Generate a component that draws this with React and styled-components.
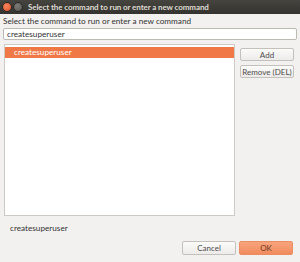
import React from "react"
import styled, {createGlobalStyle} from "styled-components"

const Global = createGlobalStyle`
	html, body {
		margin: 0;
		padding: 0;
		background: #f2f1f0;
	}
	body {
		font-family: Lato, "Open Sans", sans-serif;
		font-size: 8.2px;
		color: #333;
	}
`

export default function App() {
	return (
		<Window>
			<Global />
			<TitleBar>
				<Controls>
					<Dot close />
					<Dot />
				</Controls>
				<Title>Select the command to run or enter a new command</Title>
			</TitleBar>
			<Body>
				<Label>Select the command to run or enter a new command</Label>
				<Input defaultValue="createsuperuser" />
				<Middle>
					<List>
						<Row selected>createsuperuser</Row>
					</List>
					<Side>
						<Button>Add</Button>
						<Button>Remove (DEL)</Button>
					</Side>
				</Middle>
				<Preview>createsuperuser</Preview>
				<Footer>
					<Button wide>Cancel</Button>
					<Button wide primary>OK</Button>
				</Footer>
			</Body>
		</Window>
	)
}

const Window = styled.div`
	width: 300px;
	height: 262px;
	display: flex;
	flex-direction: column;
	background: #f2f1f0;
	overflow: hidden;
`

const TitleBar = styled.div`
	height: 14px;
	flex: none;
	display: flex;
	align-items: center;
	background: linear-gradient(#45443f, #34332f);
	padding-left: 2px;
`

const Controls = styled.div`
	display: flex;
	gap: 1px;
	width: 26px;
`

const Dot = styled.span`
	width: 8px;
	height: 8px;
	border-radius: 50%;
	background: ${p => p.close ? `radial-gradient(circle at 40% 35%, #f8865c, #e0502a)` : `radial-gradient(circle at 40% 35%, #7b7a75, #55544f)`};
	border: 1px solid #2a2926;
`

const Title = styled.div`
	font-weight: bold;
	font-size: 8px;
	color: #dfdbd2;
	white-space: nowrap;
	letter-spacing: -0.1px;
`

const Body = styled.div`
	flex: 1;
	display: flex;
	flex-direction: column;
	padding: 1px 3px 7px 3px;
`

const Label = styled.div`
	height: 12px;
	line-height: 12px;
	white-space: nowrap;
`

const Input = styled.input`
	height: 10px;
	margin-top: 1px;
	padding: 0 3px;
	border: 1px solid #bdbab4;
	border-radius: 2px;
	background: #fff;
	font: inherit;
	color: #333;
	outline: none;
	box-sizing: content-box;
`

const Middle = styled.div`
	display: flex;
	gap: 5px;
	margin-top: 4px;
	height: 172px;
	padding-left: 1px;
`

const List = styled.div`
	width: 231px;
	background: #fff;
	border: 1px solid #cdcac5;
	box-sizing: border-box;
	padding: 1px 0 0 0;
`

const Row = styled.div`
	height: 11px;
	line-height: 11px;
	padding-left: 9px;
	background: ${p => p.selected ? "#f07746" : "transparent"};
	color: ${p => p.selected ? "#fff" : "#333"};
	margin-top: 1px;
`

const Side = styled.div`
	display: flex;
	flex-direction: column;
	gap: 4px;
	padding-top: 4px;
	width: 54px;
`

const Button = styled.button`
	height: ${p => p.wide ? "14px" : "13px"};
	width: ${p => p.wide ? "54px" : "100%"};
	padding: 0;
	font: inherit;
	font-size: 8px;
	white-space: nowrap;
	color: ${p => p.primary ? "#6b3b25" : "#4c4c4c"};
	border: 1px solid ${p => p.primary ? "#ea8d62" : "#c4c1bc"};
	border-radius: 2px;
	background: ${p => p.primary ? "linear-gradient(#f7a47d, #f28b5e)" : "linear-gradient(#fbfbfa, #ecebe9)"};
	box-sizing: border-box;
`

const Preview = styled.div`
	margin-top: 7px;
	padding-left: 7px;
	height: 11px;
	line-height: 11px;
`

const Footer = styled.div`
	margin-top: auto;
	display: flex;
	justify-content: flex-end;
	gap: 3px;
	padding-right: 4px;
`
